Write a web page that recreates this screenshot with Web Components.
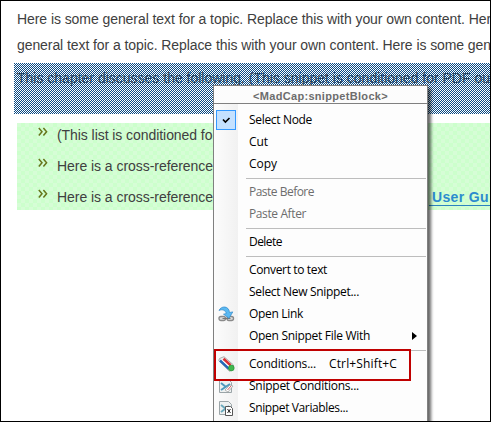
<!DOCTYPE html>
<html lang="en"><head><meta charset="utf-8"><title>Topic editor</title>
<style>html,body{margin:0;width:491px;height:422px;overflow:hidden;background:#fff}</style></head>
<body><topic-editor></topic-editor>
<script>
class FitText extends HTMLElement{
  connectedCallback(){
    const r=this.attachShadow({mode:'open'});
    r.innerHTML='<style>:host{display:inline-block;white-space:nowrap}span{display:inline-block}</style><span><slot></slot></span>';
    const s=r.querySelector('span'),w=+this.getAttribute('w');
    if(w){s.style.letterSpacing=(w-s.getBoundingClientRect().width)/this.textContent.length+'px';}
  }
}
class MenuItem extends HTMLElement{
  connectedCallback(){
    const r=this.attachShadow({mode:'open'});
    r.innerHTML=`<style>
:host{display:grid;grid-template-columns:35px auto auto 1fr;align-items:center;height:22px;color:#000}
:host([disabled]){color:#6d6d6d}
.i{display:flex;padding-left:4px;height:16px;align-items:center}
.t,.k{padding-bottom:2px}
.k{padding-left:13px}.a{justify-self:end;margin-right:10px;width:0;height:0;border-left:5px solid #000;border-top:4px solid transparent;border-bottom:4px solid transparent}
</style><div class="i"><slot name="icon"></slot></div><div class="t"><slot></slot></div><div class="k"><slot name="key"></slot></div>${this.hasAttribute('sub')?'<div class="a"></div>':''}`;
  }
}
class MenuRule extends HTMLElement{
  connectedCallback(){this.attachShadow({mode:'open'}).innerHTML='<style>:host{display:flow-root;height:6px}div{margin:3px 1px 0 32px;height:1px;background:#bdbdbd}</style><div></div>';}
}
class ContextMenu extends HTMLElement{
  connectedCallback(){this.attachShadow({mode:'open'}).innerHTML=`<style>
:host{display:block;box-sizing:border-box;width:215px;height:345px;border:1px solid #808080;background:linear-gradient(90deg,#fcfcfc 0,#f1f1f1 24px,#fdfdfd 24px);box-shadow:3px 3px 3px rgba(0,0,0,.6);font:12px "Open Sans","Noto Sans",sans-serif}
header{height:17px;border-bottom:1px solid #808080;background:#fcfcfc;text-align:center;color:#6d6d6d;font:bold 11px/20px "Liberation Sans",sans-serif}
.list{padding:5px 0 0}
</style><header><slot name="title"></slot></header><div class="list"><slot></slot></div>`;}
}
class ListRow extends HTMLElement{
  connectedCallback(){this.attachShadow({mode:'open'}).innerHTML=`<style>
:host{display:flex;height:31px;line-height:25px}svg{width:10px;height:10px;margin:4px 9px 0 21px;flex:none}
</style><svg viewBox="0 0 10 10" fill="none" stroke="#66751b" stroke-width="1.5"><path d="M.8 1 4 4.800.8 8.600M5.400 1l3.200 3.800L5.400 8.600"/></svg><slot></slot>`;}
}
class TopicEditor extends HTMLElement{
  connectedCallback(){this.attachShadow({mode:'open'}).innerHTML=`<style>
:host{display:block;position:relative;box-sizing:border-box;width:491px;height:422px;border:1px solid #000;overflow:hidden;background:#fff;font:14px "Liberation Sans",sans-serif;color:#404040}
.p{padding:5px 0 0 16px;line-height:26px;height:51px;white-space:nowrap}
.p fit-text{display:block}
.snip{position:relative;margin:6px 0 0 13px;height:51px;padding:2px 0 0 3px;line-height:26px;white-space:nowrap;box-sizing:border-box}
.snip svg{position:absolute;inset:0;width:100%;height:100%}
.list{margin:9px 0 0 16px;height:87px;white-space:nowrap;overflow:hidden;background:repeating-conic-gradient(#ccffcc 0 25%,#d6fdd6 0 50%) 0 0/8px 8px}
.link{position:absolute;left:428px;top:185px;height:20px;width:62px;border-bottom:1px solid #2c83bf;box-sizing:border-box;padding-left:3px;font-weight:bold;color:#2c8bce;line-height:23px;white-space:nowrap}
context-menu{position:absolute;left:212px;top:84px}
.box{position:absolute;left:213px;top:348px;width:197px;height:32px;border:2px solid #c00000;box-sizing:border-box}
.check{width:18px;height:18px;border:1px solid #3399ff;background:#c4e1ff;margin-left:-2px;flex:none}
</style>
<div class="p"><fit-text w="474">Here is some general text for a topic. Replace this with your own content. Her</fit-text><fit-text w="474">general text for a topic. Replace this with your own content. Here is some gen</fit-text></div>
<div class="snip"><fit-text w="473">This chapter discusses the following. (This snippet is conditioned for PDF ou</fit-text>
<svg shape-rendering="crispEdges"><defs><pattern id="d" width="2" height="2" patternUnits="userSpaceOnUse"><path fill="#0a4a84" d="M0 0h1v1H0zM1 1h1v1H1z"/></pattern></defs><rect width="100%" height="100%" fill="url(#d)"/></svg></div>
<div class="list"><list-row><fit-text w="160">(This list is conditioned for</fit-text></list-row><list-row><fit-text w="156">Here is a cross-reference</fit-text></list-row><list-row><fit-text w="156">Here is a cross-reference</fit-text></list-row></div>
<div class="link"><fit-text w="57">User Gu</fit-text></div>
<context-menu>
<fit-text slot="title" w="135">&lt;MadCap:snippetBlock&gt;</fit-text>
<menu-item><svg slot="icon" class="check" viewBox="0 0 18 18"><path d="m6 8.500 2.400 2.600L12.500 7" fill="none" stroke="#000" stroke-width="1.6"/></svg><fit-text w="63">Select Node</fit-text></menu-item>
<menu-item><fit-text w="19">Cut</fit-text></menu-item>
<menu-item><fit-text w="28">Copy</fit-text></menu-item><menu-rule></menu-rule>
<menu-item disabled><fit-text w="65">Paste Before</fit-text></menu-item>
<menu-item disabled><fit-text w="57">Paste After</fit-text></menu-item><menu-rule></menu-rule>
<menu-item><fit-text w="33">Delete</fit-text></menu-item><menu-rule></menu-rule>
<menu-item><fit-text w="78">Convert to text</fit-text></menu-item>
<menu-item><fit-text w="110">Select New Snippet...</fit-text></menu-item>
<menu-item><svg slot="icon" width="17" height="16" viewBox="0 0 17 16"><g fill="#ddd" stroke="#8a8a8a" stroke-width="1.4"><rect x="1" y="10.500" width="6.500" height="4" rx="2"/><rect x="9" y="10.500" width="6.500" height="4" rx="2"/></g><path d="M4.500 12.500h8" stroke="#777"/><path d="M1 4.500C3-.5 11-.5 11.500 6.500l3.300-.6L11 12.300 5.500 8.200l2.800-.7C7.500 4 4 3 1 4.500z" fill="#5ab9f2" stroke="#2f86c8" stroke-width=".7"/></svg><fit-text w="54">Open Link</fit-text></menu-item>
<menu-item sub><fit-text w="121">Open Snippet File With</fit-text></menu-item><menu-rule></menu-rule>
<menu-item><svg slot="icon" width="17" height="16" viewBox="0 0 17 16"><path d="M.8 4.500 1.500 2.500 6 .7 15.500 9v4l-4 2.300z" fill="#f1f1f1" stroke="#999" stroke-width=".8"/><path d="m5.500 2.800 7 6.500" stroke="#dc2f35" stroke-width="2.600"/><path d="m2 4.500 9 8.300" stroke="#2468b8" stroke-width="2.400"/><path d="m4.500 4.500 7 6.300" stroke="#fff" stroke-width=".9"/><circle cx="13.300" cy="12" r="2.900" fill="#3fb84d" stroke="#258a35" stroke-width=".6"/></svg><fit-text w="67">Conditions...</fit-text><fit-text slot="key" w="68">Ctrl+Shift+C</fit-text></menu-item>
<menu-item><svg slot="icon" width="16" height="16" viewBox="0 0 16 16"><path d="M1.500 1.500h9l3 3v10h-12z" fill="#eef1f1" stroke="#9ba5a8"/><path d="m3 5 5 4M3 12l9-6" stroke="#4f99bd" stroke-width="2"/><path d="m7 12 5-5 3 1-5 6z" fill="#fff" stroke="#999" stroke-width=".7"/><path d="m9.500 12 3.500-4" stroke="#d45b60"/></svg><fit-text w="110">Snippet Conditions...</fit-text></menu-item>
<menu-item><svg slot="icon" width="16" height="16" viewBox="0 0 16 16"><path d="M1.500 1.500h9l3 3v10h-12z" fill="#eef1f1" stroke="#9ba5a8"/><path d="m3 5 5 4M3 12l8-6" stroke="#6caabd" stroke-width="2"/><path d="M7.500 6.500h5l2 2v7h-7z" fill="#fff" stroke="#555"/><path d="m9.500 9 3 4m0-4-3 4" stroke="#222"/></svg><fit-text w="99">Snippet Variables...</fit-text></menu-item>
</context-menu><div class="box"></div>`;}
}
customElements.define('fit-text',FitText);customElements.define('menu-item',MenuItem);customElements.define('menu-rule',MenuRule);customElements.define('context-menu',ContextMenu);customElements.define('list-row',ListRow);customElements.define('topic-editor',TopicEditor);
</script></body></html>
